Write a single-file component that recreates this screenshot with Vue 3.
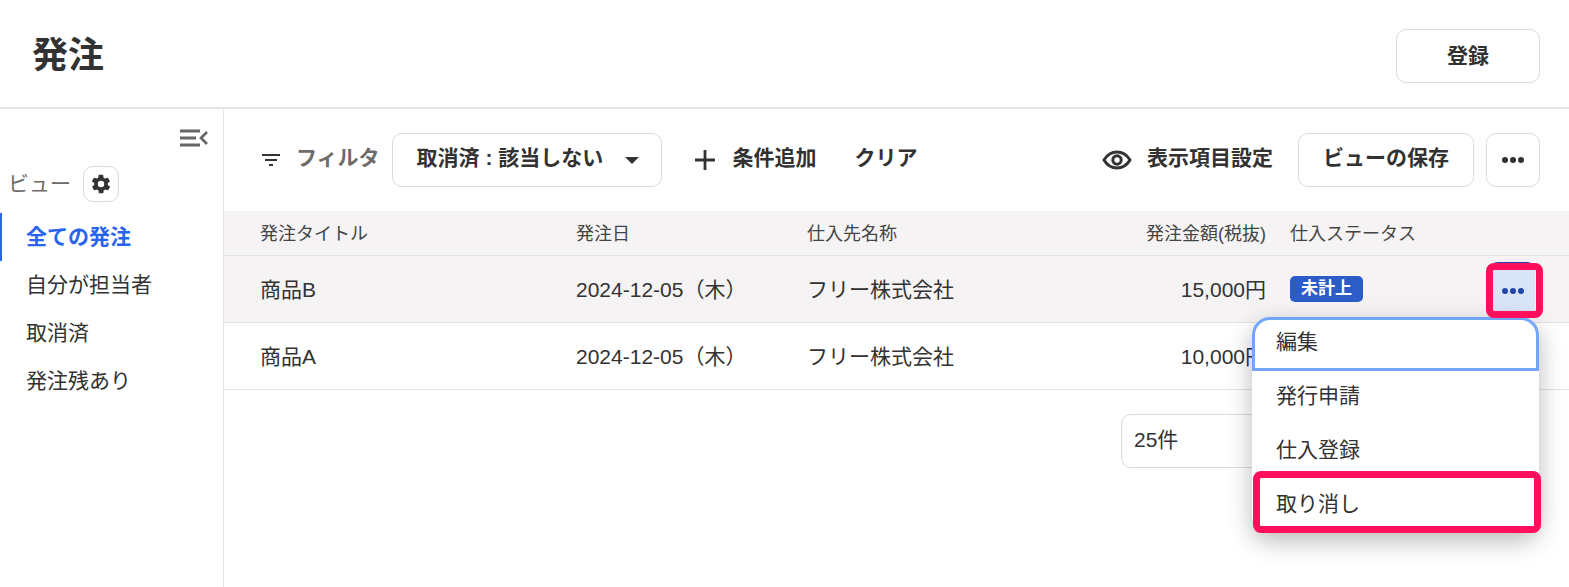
<script setup>
const views = ['全ての発注', '自分が担当者', '取消済', '発注残あり'];
const rows = [
  { title: '商品B', date: '2024-12-05（木）', vendor: 'フリー株式会社', amount: '15,000円', status: '未計上' },
  { title: '商品A', date: '2024-12-05（木）', vendor: 'フリー株式会社', amount: '10,000円', status: '' }
];
const menu = ['編集', '発行申請', '仕入登録', '取り消し'];
</script>

<template>
  <div class="page">
    <header class="header">
      <h1>発注</h1>
      <button class="btn register">登録</button>
    </header>
    <div class="body">
      <aside class="side">
        <div class="collapse">
          <svg width="28" height="18" viewBox="0 0 28 18" fill="none" stroke="#666" stroke-width="3">
            <path d="M0 2h20M0 9h16M0 16h20" />
            <path d="M27 3l-6 6 6 6" stroke-width="2.6" />
          </svg>
        </div>
        <div class="view-head">
          <span class="view-title">ビュー</span>
          <button class="gear">
            <svg width="22" height="22" viewBox="0 0 24 24" fill="#333">
              <path d="M19.4 13a7.6 7.6 0 0 0 0-2l2.1-1.6a.5.5 0 0 0 .1-.7l-2-3.4a.5.5 0 0 0-.6-.2l-2.5 1a7.5 7.5 0 0 0-1.7-1l-.4-2.7a.5.5 0 0 0-.5-.4h-4a.5.5 0 0 0-.5.4l-.4 2.7a7.5 7.5 0 0 0-1.7 1l-2.5-1a.5.5 0 0 0-.6.2l-2 3.4a.5.5 0 0 0 .1.7L4.6 11a7.6 7.6 0 0 0 0 2l-2.1 1.6a.5.5 0 0 0-.1.7l2 3.4c.1.2.4.3.6.2l2.5-1c.5.4 1.1.7 1.7 1l.4 2.7c0 .2.2.4.5.4h4c.3 0 .5-.2.5-.4l.4-2.7c.6-.3 1.2-.6 1.7-1l2.5 1c.2.1.5 0 .6-.2l2-3.4a.5.5 0 0 0-.1-.7L19.4 13zM12 15.5a3.5 3.5 0 1 1 0-7 3.5 3.5 0 0 1 0 7z" />
            </svg>
          </button>
        </div>
        <nav class="views">
          <a v-for="(v, i) in views" :key="v" :class="{ active: i === 0 }">{{ v }}</a>
        </nav>
      </aside>
      <main class="main">
        <div class="toolbar">
          <svg class="filter-icon" width="18" height="12" viewBox="0 0 18 12" fill="#333">
            <path d="M0 0h18v2H0zM3 5h12v2H3zM7 10h4v2H7z" />
          </svg>
          <span class="filter-label lift">フィルタ</span>
          <button class="btn chip">
            <span class="lift">取消済 : 該当しない</span>
            <i class="caret"></i>
          </button>
          <button class="plain add">
            <svg width="22" height="22" viewBox="0 0 22 22" stroke="#333" stroke-width="2.800">
              <path d="M11 1v20M1 11h20" />
            </svg>
            <span class="lift">条件追加</span>
          </button>
          <button class="plain clear"><span class="lift">クリア</span></button>
          <button class="plain columns">
            <svg width="30" height="20" viewBox="0 0 30 20" fill="none" stroke="#333" stroke-width="3">
              <path d="M2 10c3-5 7.500-8 13-8s10 3 13 8c-3 5-7.500 8-13 8S5 15 2 10z" />
              <circle cx="15" cy="10" r="4.200" />
            </svg>
            <span class="lift">表示項目設定</span>
          </button>
          <button class="btn save"><span class="lift">ビューの保存</span></button>
          <button class="btn more"><i></i><i></i><i></i></button>
        </div>

        <div class="table">
          <div class="grid thead">
            <span class="cell">発注タイトル</span>
            <span class="cell">発注日</span>
            <span class="cell">仕入先名称</span>
            <span class="cell right">発注金額(税抜)</span>
            <span class="cell">仕入ステータス</span>
          </div>
          <div v-for="(r, i) in rows" :key="r.title" class="grid row" :class="{ hover: i === 0 }">
            <span class="cell">{{ r.title }}</span>
            <span class="cell">{{ r.date }}</span>
            <span class="cell">{{ r.vendor }}</span>
            <span class="cell right">{{ r.amount }}</span>
            <span class="status"><em v-if="r.status" class="badge">{{ r.status }}</em></span>
            <span v-if="i === 0" class="action-wrap">
              <button class="action"><i></i><i></i><i></i></button>
            </span>
          </div>
        </div>

        <div class="pager">
          <div class="per-page">25件</div>
        </div>

        <ul class="menu">
          <li v-for="(m, i) in menu" :key="m" :class="{ focused: i === 0 }">{{ m }}</li>
        </ul>
        <div class="mark mark-action"></div>
        <div class="mark mark-cancel"></div>
      </main>
    </div>
  </div>
</template>

<style scoped>
.page {
  width: 1569px;
  height: 587px;
  overflow: hidden;
  background: #fff;
  color: #323232;
  font-family: "Liberation Sans", "Noto Sans CJK JP", sans-serif;
  font-size: 21px;
  display: flex;
  flex-direction: column;
}

button {
  font-family: inherit;
  color: inherit;
  background: #fff;
  padding: 0;
}

.lift {
  padding-bottom: 8px;
}

.header {
  height: 109px;
  box-sizing: border-box;
  border-bottom: 2px solid #e4e4e4;
  display: flex;
  align-items: center;
  justify-content: space-between;
  padding: 0 29px 0 32px;
  flex-shrink: 0;
}

.header h1 {
  margin: 0 0 4px;
  font-size: 36px;
  font-weight: 700;
}

.btn {
  border: 1px solid #dcdcdc;
  border-radius: 10px;
  font-weight: 700;
  font-size: 21px;
}

.register {
  width: 144px;
  height: 54px;
  margin-top: 5px;
  padding-bottom: 4px;
}

.body {
  flex: 1;
  display: flex;
  min-height: 0;
}

.side {
  width: 224px;
  box-sizing: border-box;
  border-right: 1px solid #e4e4e4;
  flex-shrink: 0;
}

.collapse {
  display: flex;
  justify-content: flex-end;
  padding: 20px 15px 0 0;
  height: 39px;
  box-sizing: border-box;
}

.view-head {
  display: flex;
  align-items: center;
  gap: 12px;
  padding-left: 8px;
  margin-top: 18px;
  color: #6e6b68;
  height: 36px;
}

.view-title {
  padding-bottom: 4px;
}

.gear {
  width: 36px;
  height: 36px;
  border: 1px solid #dcdcdc;
  border-radius: 10px;
  display: flex;
  align-items: center;
  justify-content: center;
}

.views {
  display: flex;
  flex-direction: column;
  margin-top: 11px;
}

.views a {
  height: 48px;
  line-height: 48px;
  padding-left: 26px;
  box-sizing: border-box;
}

.views a.active {
  color: #2864f0;
  font-weight: 700;
  border-left: 2px solid #2864f0;
  padding-left: 24px;
}

.main {
  flex: 1;
  min-width: 0;
  position: relative;
}

.toolbar {
  height: 102px;
  box-sizing: border-box;
  display: flex;
  align-items: center;
  padding: 0 29px 0 38px;
  font-weight: 700;
}

.filter-icon {
  margin: 0 16px 0 0;
}

.filter-label {
  color: #6e6b68;
  margin-right: 12px;
}

.chip {
  width: 270px;
  height: 54px;
  display: flex;
  align-items: center;
  justify-content: space-between;
  padding: 0 22px 0 24px;
  box-sizing: border-box;
}

.caret {
  width: 0;
  height: 0;
  border-left: 7px solid transparent;
  border-right: 7px solid transparent;
  border-top: 7px solid #323232;
}

.plain {
  border: 0;
  display: flex;
  align-items: center;
  font-weight: 700;
  font-size: 21px;
}

.add {
  margin-left: 32px;
  gap: 17px;
}

.clear {
  margin-left: 38px;
}

.columns {
  margin-left: auto;
  gap: 15px;
}

.save {
  width: 176px;
  height: 54px;
  margin-left: 25px;
  display: flex;
  align-items: center;
  justify-content: center;
}

.more {
  width: 54px;
  height: 54px;
  margin-left: 12px;
  display: flex;
  align-items: center;
  justify-content: center;
  gap: 2px;
}

.more i,
.action i {
  width: 6px;
  height: 6px;
  border-radius: 50%;
  background: #323232;
}

.grid {
  display: grid;
  grid-template-columns: 292px 207px 1fr 130px 176px 45px;
  column-gap: 24px;
  padding: 0 34px 0 36px;
  align-items: center;
  border-bottom: 1px solid #e4e4e4;
  box-sizing: border-box;
}

.cell {
  padding-bottom: 2px;
}

.thead {
  height: 45px;
  background: #f5f3f3;
  font-size: 18px;
  color: #444;
}

.row {
  height: 67px;
}

.row.hover {
  background: #f5f3f3;
}

.right {
  text-align: right;
  white-space: nowrap;
}

.status {
  display: flex;
}

.badge {
  display: block;
  font-style: normal;
  background: #2b5cc8;
  color: #fff;
  font-size: 17px;
  font-weight: 700;
  line-height: 26px;
  padding: 0 11px;
  border-radius: 5px;
}

.action-wrap {
  display: flex;
}

.action {
  width: 45px;
  height: 54px;
  border: 0;
  border-top: 3px solid #1e3fa8;
  border-radius: 8px 8px 0 0;
  background: #d9e4f8;
  display: flex;
  align-items: center;
  justify-content: center;
  gap: 2px;
}

.action i {
  background: #2347a8;
}

.pager {
  display: flex;
  padding: 24px 0 0 897px;
}

.per-page {
  width: 220px;
  height: 54px;
  line-height: 50px;
  box-sizing: border-box;
  border: 1px solid #dcdcdc;
  border-radius: 10px;
  padding-left: 12px;
}

.menu {
  position: absolute;
  left: 1028px;
  top: 208px;
  width: 287px;
  margin: 0;
  padding: 0;
  list-style: none;
  background: #fff;
  border-radius: 18px;
  box-shadow: 0 8px 24px rgba(0, 0, 0, 0.28);
}

.menu li {
  height: 54px;
  line-height: 50px;
  padding-left: 24px;
  box-sizing: border-box;
}

.menu li.focused {
  border: 3px solid #73a5fa;
  border-radius: 18px 18px 0 0;
  padding-left: 21px;
  line-height: 44px;
}

.mark {
  position: absolute;
  border: 7px solid #ff0f5c;
  border-radius: 8px;
  box-sizing: border-box;
}

.mark-action {
  left: 1262px;
  top: 154px;
  width: 57px;
  height: 55px;
}

.mark-cancel {
  left: 1029px;
  top: 362px;
  width: 288px;
  height: 62px;
}
</style>
